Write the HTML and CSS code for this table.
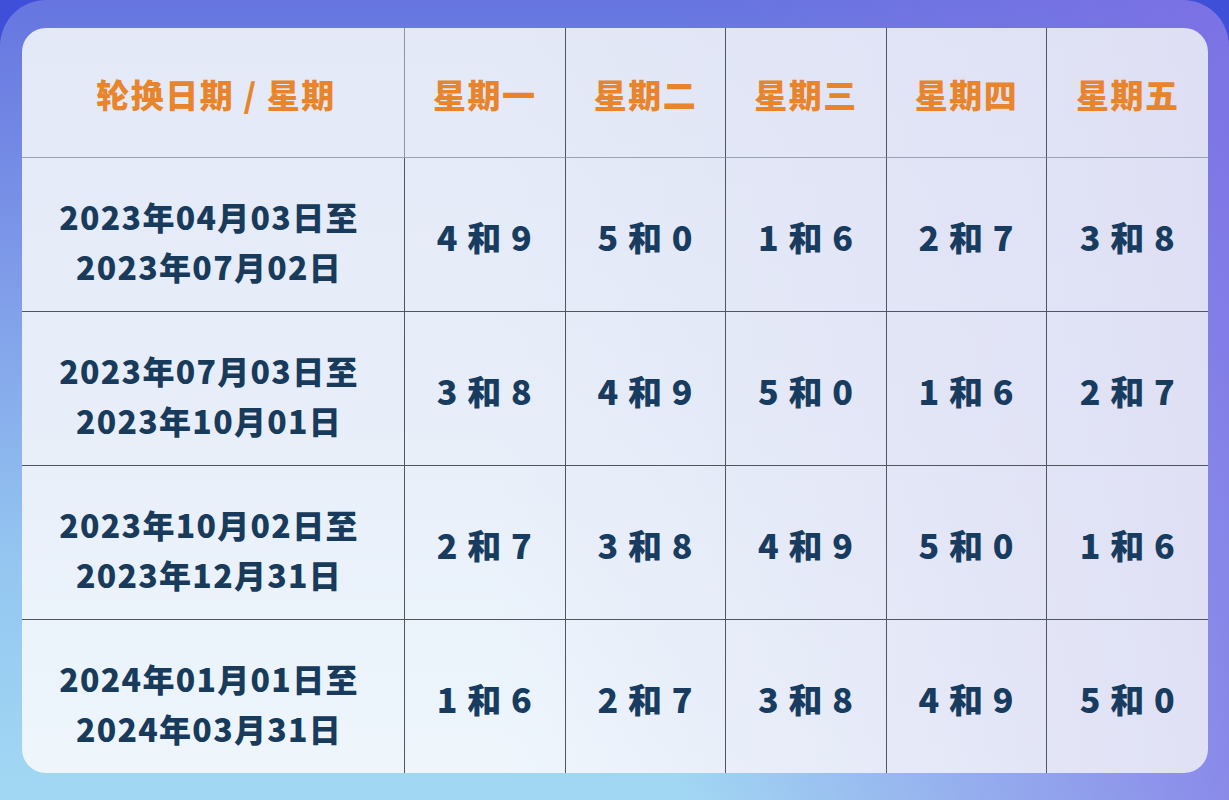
FILE: index.html
```html
<!DOCTYPE html>
<html lang="zh-CN">
<head>
<meta charset="utf-8">
<title>轮换日期</title>
<link rel="stylesheet" href="styles.css">
</head>
<body>
<div class="frame">
  <div class="card">
    <div class="cell head first">轮换日期 / 星期</div>
    <div class="cell head">星期一</div>
    <div class="cell head">星期二</div>
    <div class="cell head">星期三</div>
    <div class="cell head">星期四</div>
    <div class="cell head last">星期五</div>

    <div class="cell date first"><span>2023年04月03日至</span><span>2023年07月02日</span></div>
    <div class="cell num">4 和 9</div>
    <div class="cell num">5 和 0</div>
    <div class="cell num">1 和 6</div>
    <div class="cell num">2 和 7</div>
    <div class="cell num last">3 和 8</div>

    <div class="cell date first"><span>2023年07月03日至</span><span>2023年10月01日</span></div>
    <div class="cell num">3 和 8</div>
    <div class="cell num">4 和 9</div>
    <div class="cell num">5 和 0</div>
    <div class="cell num">1 和 6</div>
    <div class="cell num last">2 和 7</div>

    <div class="cell date first"><span>2023年10月02日至</span><span>2023年12月31日</span></div>
    <div class="cell num">2 和 7</div>
    <div class="cell num">3 和 8</div>
    <div class="cell num">4 和 9</div>
    <div class="cell num">5 和 0</div>
    <div class="cell num last">1 和 6</div>

    <div class="cell date first bottom"><span>2024年01月01日至</span><span>2024年03月31日</span></div>
    <div class="cell num bottom">1 和 6</div>
    <div class="cell num bottom">2 和 7</div>
    <div class="cell num bottom">3 和 8</div>
    <div class="cell num bottom">4 和 9</div>
    <div class="cell num bottom last">5 和 0</div>
  </div>
</div>
</body>
</html>
```

FILE: styles.css
```css
html, body {
  margin: 0;
  padding: 0;
  width: 1229px;
  height: 800px;
  overflow: hidden;
  background: #3f4fd7;
  font-family: "Noto Sans CJK SC", "Noto Sans", sans-serif;
}

.frame {
  width: 1229px;
  height: 800px;
  box-sizing: border-box;
  padding: 28px 21px 27px 22px;
  border-radius: 46px 46px 0 0;
  background:
    linear-gradient(90deg, rgba(140,120,232,0) 55%, rgba(130,112,230,0.75) 100%),
    linear-gradient(180deg, #6675e0 0%, #7f9ce9 35%, #94c6f1 70%, #a2d8f3 100%);
}

.card {
  width: 1186px;
  height: 745px;
  border-radius: 24px;
  overflow: hidden;
  display: grid;
  grid-template-columns: 383px repeat(5, 1fr);
  grid-template-rows: 130px 154px 154px 154px 153px;
  background:
    linear-gradient(90deg, rgba(226,226,245,0) 40%, rgba(222,222,244,0.9) 100%),
    linear-gradient(180deg, #e3e9f7 0%, #e7eef9 50%, #eef6fc 100%);
}

.cell {
  display: flex;
  align-items: center;
  justify-content: center;
  border-right: 1.5px solid #50565f;
  border-bottom: 1.5px solid #50565f;
  box-sizing: border-box;
}

.cell.last {
  border-right: none;
}

.cell.bottom {
  border-bottom: none;
}

.cell.head {
  border-bottom-color: #9aa3b3;
  color: #e8852c;
  font-size: 33px;
  font-weight: 800;
  letter-spacing: 1.5px;
  padding-top: 2px;
}

.cell.head.first {
  border-right-color: #8f97a6;
  padding-left: 6px;
}

.cell.date {
  flex-direction: column;
  color: #183a5b;
  font-size: 32px;
  font-weight: 900;
  line-height: 50px;
  letter-spacing: 1.3px;
  padding-top: 12px;
  padding-right: 8px;
}

.cell.num {
  color: #183c60;
  font-size: 34px;
  font-weight: 900;
  letter-spacing: 1px;
  white-space: pre;
  padding-top: 4px;
}
```
